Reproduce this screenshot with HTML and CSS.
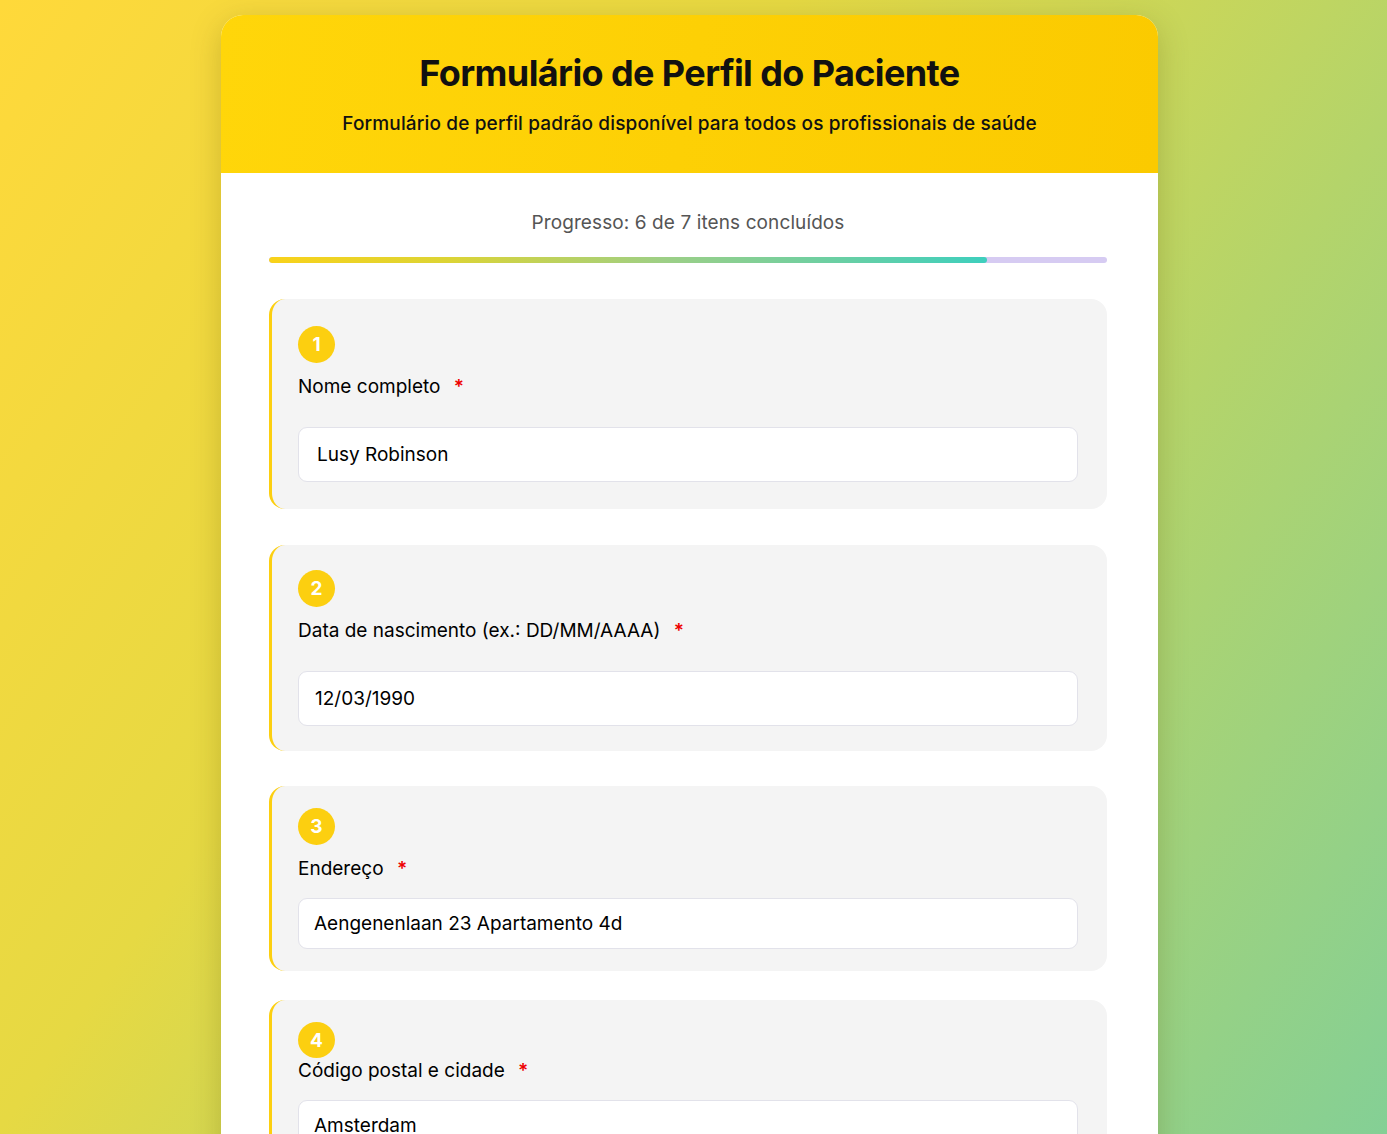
FILE: index.html
```html
<!DOCTYPE html>
<html lang="pt">
<head>
  <meta charset="UTF-8">
  <title>Formulário de Perfil do Paciente</title>
  <link rel="stylesheet" href="styles.css">
</head>
<body>
  <div class="form-card">
    <div class="form-header">
      <h1>Formulário de Perfil do Paciente</h1>
      <p>Formulário de perfil padrão disponível para todos os profissionais de saúde</p>
    </div>

    <div class="form-body">
      <div class="progress-label">Progresso: 6 de 7 itens concluídos</div>
      <div class="progress-track">
        <div class="progress-fill" style="width: 85.7%;"></div>
      </div>

      <div class="question">
        <div class="step">1</div>
        <label class="question-label">Nome completo <span class="required">*</span></label>
        <input class="text-input" type="text" value="Lusy Robinson">
      </div>

      <div class="question short">
        <div class="step">2</div>
        <label class="question-label">Data de nascimento (ex.: DD/MM/AAAA) <span class="required">*</span></label>
        <input class="text-input date-input" type="text" value="12/03/1990">
      </div>

      <div class="question compact">
        <div class="step">3</div>
        <label class="question-label">Endereço <span class="required">*</span></label>
        <input class="text-input" type="text" value="Aengenenlaan 23 Apartamento 4d">
      </div>

      <div class="question compact tight">
        <div class="step">4</div>
        <label class="question-label">Código postal e cidade <span class="required">*</span></label>
        <input class="text-input" type="text" value="Amsterdam">
      </div>
    </div>
  </div>
</body>
</html>
```

FILE: styles.css
```css
body {
  font-family: Inter, 'Helvetica Neue', Arial, sans-serif;
  margin: 0;
  padding-right: 8px;
  min-height: 1134px;
  background: linear-gradient(125deg, #ffd93a 0%, #e6d943 35%, #b4d46a 65%, #7fcf9a 100%);
  overflow: hidden;
}
.form-card {
  width: 937px;
  margin: 15px auto 0;
  background: white;
  border-radius: 22px;
  box-shadow: 0 8px 30px rgba(90, 80, 0, 0.25);
  overflow: hidden;
}
.form-header {
  background: linear-gradient(100deg, #ffd60a, #fbca00);
  text-align: center;
  padding: 35px 20px 36px;
  color: #111;
}
.form-header h1 {
  margin: 0;
  font-size: 36px;
  font-weight: 700;
  letter-spacing: -0.6px;
  line-height: 46px;
}
.form-header p {
  margin: 15px 0 0;
  font-size: 19px;
  font-weight: 500;
  letter-spacing: 0.15px;
  line-height: 26px;
}
.form-body {
  padding: 37px 51px 40px 48px;
}
.progress-label {
  text-align: center;
  color: #555;
  font-size: 19px;
  letter-spacing: 0.1px;
  line-height: 26px;
}
.progress-track {
  height: 6px;
  background: #d6cbf2;
  border-radius: 3px;
  margin: 21px 0 36px;
  overflow: hidden;
}
.progress-fill {
  height: 100%;
  border-radius: 3px;
  background: linear-gradient(90deg, #f9d21a 0%, #dcd435 25%, #9dcf86 55%, #3ecfbd 100%);
}

.question {
  background: #f4f4f4;
  border-left: 3px solid #fccf10;
  border-radius: 16px;
  padding: 27px 29px 27px 26px;
  margin-bottom: 36px;
}
.step {
  width: 37px;
  height: 37px;
  border-radius: 50%;
  background: #fccf10;
  color: white;
  font-weight: 700;
  font-size: 19px;
  display: flex;
  align-items: center;
  justify-content: center;
}
.question-label {
  display: block;
  margin-top: 12px;
  font-size: 19px;
  line-height: 24px;
  font-weight: 400;
  color: #000;
}
.required {
  color: #e00;
  margin-left: 8px;
  font-weight: 600;
}
.text-input {
  display: block;
  box-sizing: border-box;
  width: 100%;
  height: 55px;
  margin-top: 28px;
  padding: 0 18px;
  border: 1px solid #e2e2ea;
  border-radius: 9px;
  background: white;
  font-family: inherit;
  font-size: 19px;
  color: #000;
}
.date-input { padding-left: 16px; }
.question.short {
  padding-top: 25px;
  padding-bottom: 25px;
  margin-bottom: 35px;
}
.question.compact {
  padding-top: 22px;
  padding-bottom: 22px;
  margin-bottom: 29px;
}
.question.compact .text-input {
  height: 51px;
  margin-top: 17px;
  padding-left: 15px;
}
.question.tight .step { height: 36px; }
.question.tight .question-label { margin-top: 1px; }
```
